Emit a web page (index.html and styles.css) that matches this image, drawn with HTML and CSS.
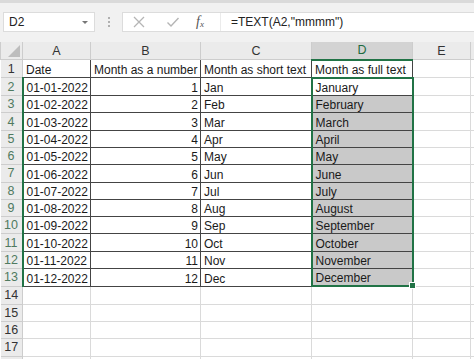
FILE: index.html
```html
<!DOCTYPE html>
<html>
<head>
<meta charset="utf-8">
<link rel="stylesheet" href="styles.css">
</head>
<body>
<div class="app">
  <div class="topband"></div>
  <div class="fbar">
    <div class="namebox"><span class="nb-text">D2</span><span class="dd"></span></div>
    <div class="dots"><i></i><i></i><i></i></div>
    <div class="fbox">
      <div class="icons">
        <svg class="ic" width="14" height="14" viewBox="0 0 14 14"><path d="M2 2 L12 12 M12 2 L2 12" stroke="#b5b5b5" stroke-width="1.3" fill="none"/></svg>
        <svg class="ic" width="14" height="14" viewBox="0 0 14 14"><path d="M1.5 7.5 L5 11 L12.5 3" stroke="#b5b5b5" stroke-width="1.4" fill="none"/></svg>
        <span class="fx">f<sub>x</sub></span>
      </div>
      <div class="ftext">=TEXT(A2,"mmmm")</div>
    </div>
  </div>
  <table class="sheet">
    <colgroup>
      <col class="c-rh"><col class="c-a"><col class="c-b"><col class="c-c"><col class="c-d"><col class="c-e"><col class="c-f">
    </colgroup>
    <thead>
      <tr class="hdr">
        <th class="corner"><span class="tri"></span></th>
        <th>A</th><th>B</th><th>C</th><th class="sel">D</th><th>E</th><th class="last"></th>
      </tr>
    </thead>
    <tbody>
      <tr><th class="rh">1</th><td class="t">Date</td><td class="t">Month as a number</td><td class="t">Month as short text</td><td class="t">Month as full text</td><td></td><td></td></tr>
      <tr><th class="rh on">2</th><td class="t">01-01-2022</td><td class="t num">1</td><td class="t">Jan</td><td class="t d act">January</td><td></td><td></td></tr>
      <tr><th class="rh on">3</th><td class="t">01-02-2022</td><td class="t num">2</td><td class="t">Feb</td><td class="t d fill">February</td><td></td><td></td></tr>
      <tr><th class="rh on">4</th><td class="t">01-03-2022</td><td class="t num">3</td><td class="t">Mar</td><td class="t d fill">March</td><td></td><td></td></tr>
      <tr><th class="rh on">5</th><td class="t">01-04-2022</td><td class="t num">4</td><td class="t">Apr</td><td class="t d fill">April</td><td></td><td></td></tr>
      <tr><th class="rh on">6</th><td class="t">01-05-2022</td><td class="t num">5</td><td class="t">May</td><td class="t d fill">May</td><td></td><td></td></tr>
      <tr><th class="rh on">7</th><td class="t">01-06-2022</td><td class="t num">6</td><td class="t">Jun</td><td class="t d fill">June</td><td></td><td></td></tr>
      <tr><th class="rh on">8</th><td class="t">01-07-2022</td><td class="t num">7</td><td class="t">Jul</td><td class="t d fill">July</td><td></td><td></td></tr>
      <tr><th class="rh on">9</th><td class="t">01-08-2022</td><td class="t num">8</td><td class="t">Aug</td><td class="t d fill">August</td><td></td><td></td></tr>
      <tr><th class="rh on">10</th><td class="t">01-09-2022</td><td class="t num">9</td><td class="t">Sep</td><td class="t d fill">September</td><td></td><td></td></tr>
      <tr><th class="rh on">11</th><td class="t">01-10-2022</td><td class="t num">10</td><td class="t">Oct</td><td class="t d fill">October</td><td></td><td></td></tr>
      <tr><th class="rh on">12</th><td class="t">01-11-2022</td><td class="t num">11</td><td class="t">Nov</td><td class="t d fill">November</td><td></td><td></td></tr>
      <tr><th class="rh on">13</th><td class="t">01-12-2022</td><td class="t num">12</td><td class="t">Dec</td><td class="t d fill end">December<span class="handle"></span></td><td></td><td></td></tr>
      <tr><th class="rh">14</th><td></td><td></td><td></td><td></td><td></td><td></td></tr>
      <tr><th class="rh">15</th><td></td><td></td><td></td><td></td><td></td><td></td></tr>
      <tr><th class="rh">16</th><td></td><td></td><td></td><td></td><td></td><td></td></tr>
      <tr><th class="rh">17</th><td></td><td></td><td></td><td></td><td></td><td></td></tr>
      <tr><th class="rh"></th><td></td><td></td><td></td><td></td><td></td><td></td></tr>
    </tbody>
  </table>
</div>
</body>
</html>
```

FILE: styles.css
```css
html, body {
  margin: 0;
  padding: 0;
  background: #ffffff;
}
.app {
  width: 474px;
  height: 359px;
  overflow: hidden;
  font-family: "Liberation Sans", Arial, sans-serif;
  background: #ffffff;
}
.topband {
  height: 3px;
  background: #dadada;
}
.fbar {
  height: 39px;
  box-sizing: border-box;
  padding-top: 9px;
  padding-left: 3px;
  background: #f1f1f1;
  display: flex;
  align-items: flex-start;
}
.namebox {
  width: 92px;
  height: 20px;
  box-sizing: border-box;
  background: #ffffff;
  border: 1px solid #dcdcdc;
  display: flex;
  align-items: center;
  justify-content: space-between;
  padding: 0 6px 0 5px;
  font-size: 12px;
  color: #222;
}
.dd {
  width: 0;
  height: 0;
  border-left: 3px solid transparent;
  border-right: 3px solid transparent;
  border-top: 3px solid #777;
}
.dots {
  width: 27px;
  height: 20px;
  display: flex;
  flex-direction: column;
  align-items: center;
  justify-content: center;
  gap: 2px;
}
.dots i {
  display: block;
  width: 2px;
  height: 2px;
  background: #b0b0b0;
}
.fbox {
  flex: 1;
  height: 20px;
  display: flex;
  background: #ffffff;
  border: 1px solid #dcdcdc;
  border-right: none;
  box-sizing: border-box;
}
.icons {
  width: 98px;
  display: flex;
  align-items: center;
  padding-left: 9px;
  gap: 20px;
  box-sizing: border-box;
  border-right: 1px solid #ebebeb;
}
.ic { flex: none; }
.fx {
  font-family: "Liberation Serif", "Times New Roman", serif;
  font-style: italic;
  font-size: 14px;
  color: #555;
  margin-left: -4px;
}
.fx sub {
  font-size: 9px;
  vertical-align: -1px;
}
.ftext {
  padding-left: 10px;
  display: flex;
  align-items: center;
  font-size: 12px;
  color: #222;
}
.sheet {
  border-collapse: collapse;
  table-layout: fixed;
  width: 480px;
  font-size: 12px;
  color: #1a1a1a;
}
.c-rh { width: 22px; }
.c-a { width: 68px; }
.c-b { width: 110px; }
.c-c { width: 111px; }
.c-d { width: 101px; }
.c-e { width: 58px; }
.c-f { width: 10px; }
.sheet th, .sheet td {
  padding: 0;
  height: 16.3px;
  line-height: 14px;
  border: 1px solid #dadada;
  white-space: nowrap;
  overflow: hidden;
}
.hdr th {
  height: 16.5px;
  background: #ebebeb;
  font-weight: normal;
  color: #333;
  font-size: 12.5px;
  text-align: center;
  border: 1px solid #cdcdcd;
  border-top: none;
}
.hdr th.sel {
  background: #d3d3d3;
  color: #1e6b40;
  border-bottom: 2px solid #217346;
}
.corner {
  position: relative;
}
.tri {
  position: absolute;
  right: 2px;
  bottom: 2px;
  width: 0;
  height: 0;
  border-left: 12px solid transparent;
  border-bottom: 12px solid #bdbdbd;
}
.rh {
  background: #ebebeb;
  font-weight: normal;
  color: #333;
  font-size: 12.5px;
  text-align: center;
  border-color: #cdcdcd !important;
  border-left: none !important;
}
.rh.on {
  color: #4f7a60;
  border-right: 2px solid #217346 !important;
}
.sheet td.t {
  border: 1px solid #444;
  padding: 0 2px 0 3px;
  vertical-align: bottom;
}
.sheet td.num { text-align: right; }
.sheet td.d {
  border-left: 2px solid #217346;
  border-right: 2px solid #217346;
}
.sheet td.act {
  border-top: 2px solid #217346;
  background: #ffffff;
}
.sheet td.fill {
  background: #c9c9c9;
}
.sheet td.end {
  border-bottom: 2px solid #217346;
  position: relative;
  overflow: visible;
}
.handle {
  position: absolute;
  right: -4px;
  bottom: -4px;
  width: 5px;
  height: 5px;
  background: #217346;
  border: 1px solid #ffffff;
}
```
